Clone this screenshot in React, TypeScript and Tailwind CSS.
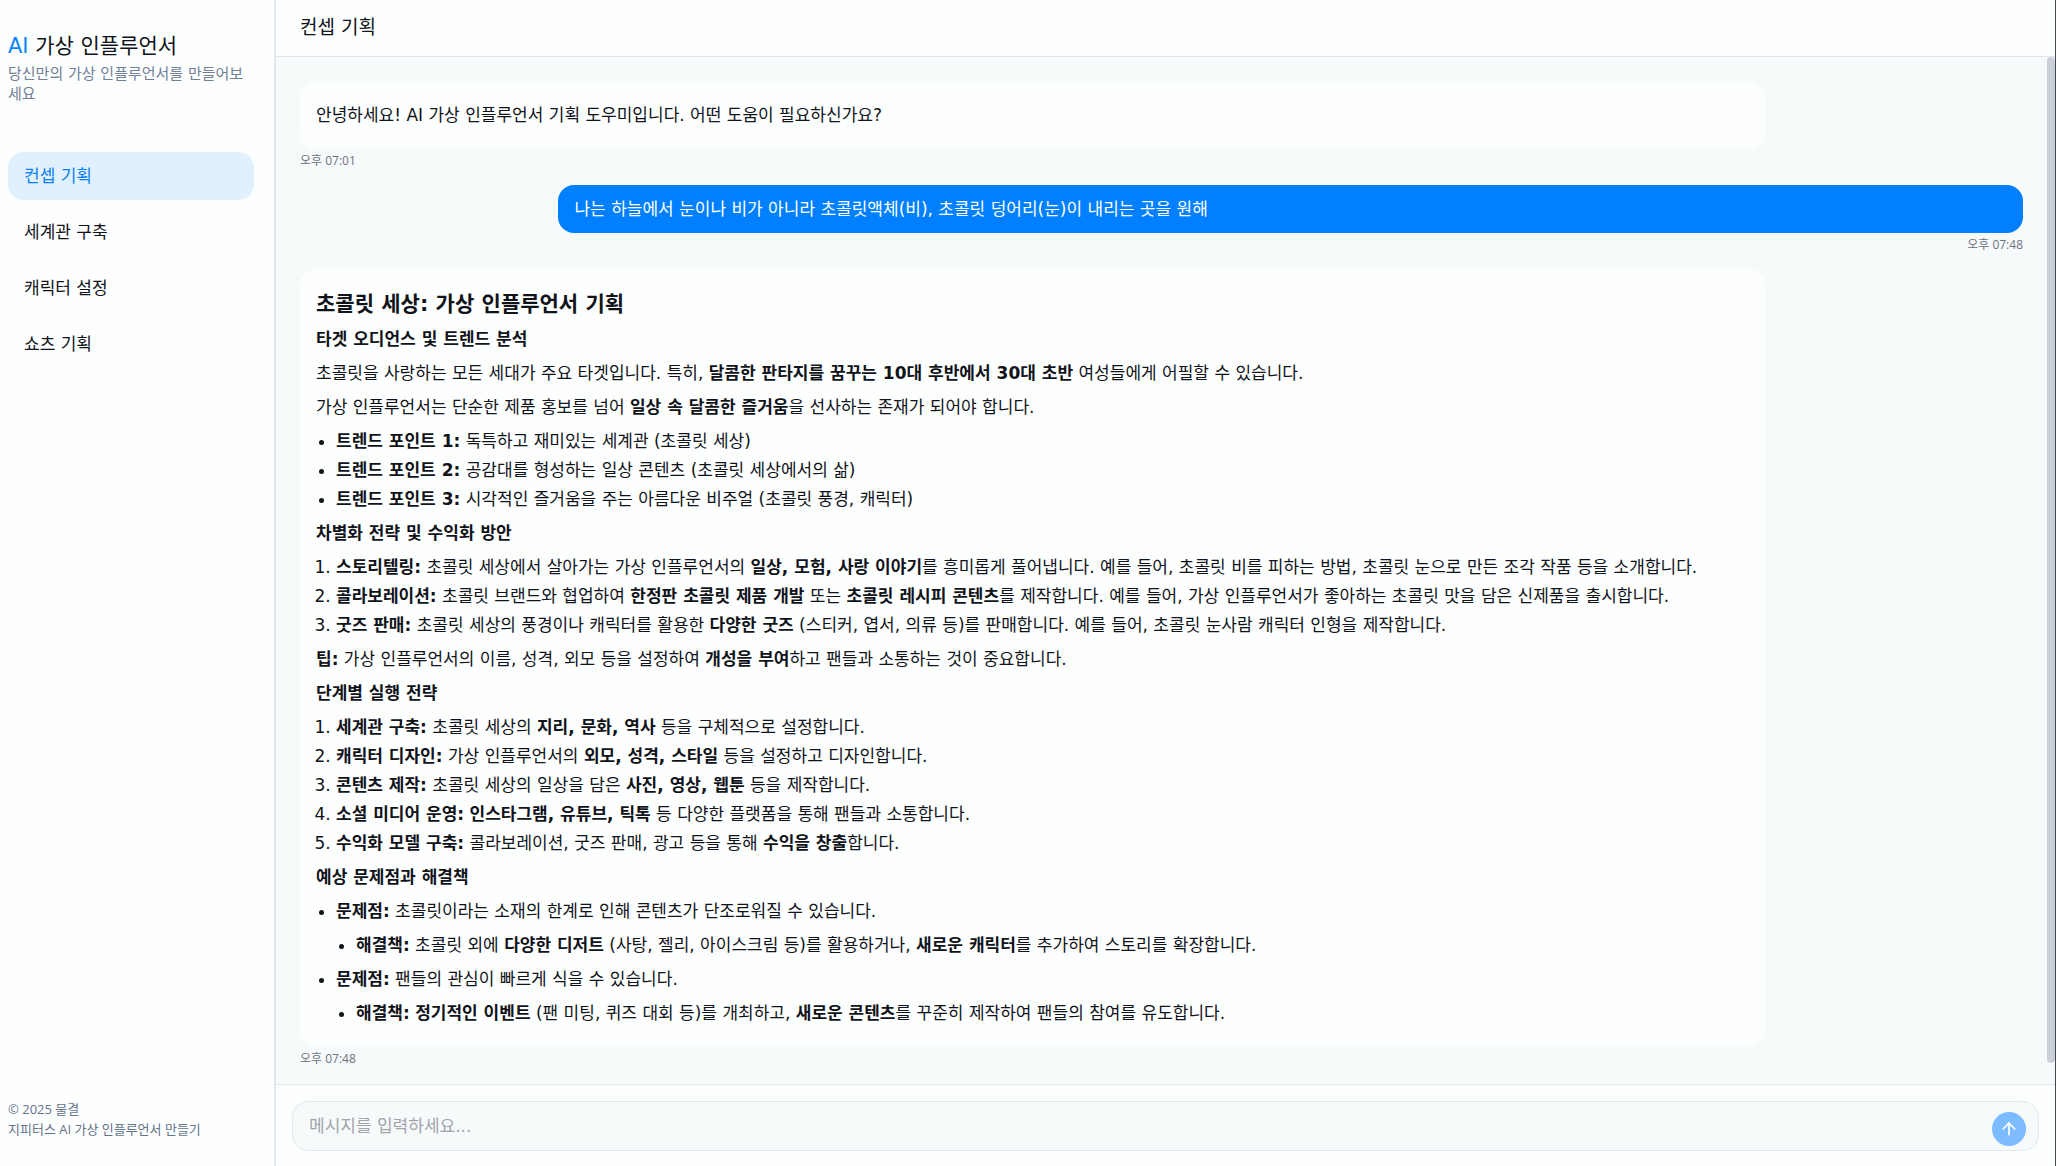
import { ArrowUp } from 'lucide-react'
import type { ReactNode } from 'react'

const menus = ['컨셉 기획', '세계관 구축', '캐릭터 설정', '쇼츠 기획']

function BotMessage({ time, children }: { time: string; children: ReactNode }) {
  return (
    <div className="w-[85%]">
      <div className="rounded-2xl bg-[#fdfefe] px-4 py-[21px] space-y-2">{children}</div>
      <Time>{time}</Time>
    </div>
  )
}

function UserMessage({ time, children }: { time: string; children: ReactNode }) {
  return (
    <div className="w-[85%] self-end text-right">
      <div className="rounded-2xl bg-[#0080ff] px-4 py-3 text-left leading-6 text-white">{children}</div>
      <Time>{time}</Time>
    </div>
  )
}

function Time({ children }: { children: ReactNode }) {
  return (
    <div className="mt-1 font-['Open_Sans','Noto_Sans_CJK_KR',sans-serif] text-[12px] leading-4 text-[#6b7280]">
      {children}
    </div>
  )
}

function H3({ children }: { children: ReactNode }) {
  return <h3 className="font-bold">{children}</h3>
}

function Plan() {
  return (
    <>
      <h2 className="text-[21px] leading-7 font-bold">초콜릿 세상: 가상 인플루언서 기획</h2>
      <H3>타겟 오디언스 및 트렌드 분석</H3>
      <p>
        초콜릿을 사랑하는 모든 세대가 주요 타겟입니다. 특히, <b>달콤한 판타지를 꿈꾸는 10대 후반에서 30대 초반</b> 여성들에게 어필할 수 있습니다.
      </p>
      <p>
        가상 인플루언서는 단순한 제품 홍보를 넘어 <b>일상 속 달콤한 즐거움</b>을 선사하는 존재가 되어야 합니다.
      </p>
      <ul className="list-disc pl-5 space-y-[3px]">
        <li><b>트렌드 포인트 1:</b> 독특하고 재미있는 세계관 (초콜릿 세상)</li>
        <li><b>트렌드 포인트 2:</b> 공감대를 형성하는 일상 콘텐츠 (초콜릿 세상에서의 삶)</li>
        <li><b>트렌드 포인트 3:</b> 시각적인 즐거움을 주는 아름다운 비주얼 (초콜릿 풍경, 캐릭터)</li>
      </ul>
      <H3>차별화 전략 및 수익화 방안</H3>
      <ol className="list-decimal pl-5 space-y-[3px]">
        <li><b>스토리텔링:</b> 초콜릿 세상에서 살아가는 가상 인플루언서의 <b>일상, 모험, 사랑 이야기</b>를 흥미롭게 풀어냅니다. 예를 들어, 초콜릿 비를 피하는 방법, 초콜릿 눈으로 만든 조각 작품 등을 소개합니다.</li>
        <li><b>콜라보레이션:</b> 초콜릿 브랜드와 협업하여 <b>한정판 초콜릿 제품 개발</b> 또는 <b>초콜릿 레시피 콘텐츠</b>를 제작합니다. 예를 들어, 가상 인플루언서가 좋아하는 초콜릿 맛을 담은 신제품을 출시합니다.</li>
        <li><b>굿즈 판매:</b> 초콜릿 세상의 풍경이나 캐릭터를 활용한 <b>다양한 굿즈</b> (스티커, 엽서, 의류 등)를 판매합니다. 예를 들어, 초콜릿 눈사람 캐릭터 인형을 제작합니다.</li>
      </ol>
      <p>
        <b>팁:</b> 가상 인플루언서의 이름, 성격, 외모 등을 설정하여 <b>개성을 부여</b>하고 팬들과 소통하는 것이 중요합니다.
      </p>
      <H3>단계별 실행 전략</H3>
      <ol className="list-decimal pl-5 space-y-[3px]">
        <li><b>세계관 구축:</b> 초콜릿 세상의 <b>지리, 문화, 역사</b> 등을 구체적으로 설정합니다.</li>
        <li><b>캐릭터 디자인:</b> 가상 인플루언서의 <b>외모, 성격, 스타일</b> 등을 설정하고 디자인합니다.</li>
        <li><b>콘텐츠 제작:</b> 초콜릿 세상의 일상을 담은 <b>사진, 영상, 웹툰</b> 등을 제작합니다.</li>
        <li><b>소셜 미디어 운영:</b> <b>인스타그램, 유튜브, 틱톡</b> 등 다양한 플랫폼을 통해 팬들과 소통합니다.</li>
        <li><b>수익화 모델 구축:</b> 콜라보레이션, 굿즈 판매, 광고 등을 통해 <b>수익을 창출</b>합니다.</li>
      </ol>
      <H3>예상 문제점과 해결책</H3>
      <ul className="list-disc pl-5 space-y-2">
        <li>
          <b>문제점:</b> 초콜릿이라는 소재의 한계로 인해 콘텐츠가 단조로워질 수 있습니다.
          <ul className="mt-2 list-disc pl-5">
            <li><b>해결책:</b> 초콜릿 외에 <b>다양한 디저트</b> (사탕, 젤리, 아이스크림 등)를 활용하거나, <b>새로운 캐릭터</b>를 추가하여 스토리를 확장합니다.</li>
          </ul>
        </li>
        <li>
          <b>문제점:</b> 팬들의 관심이 빠르게 식을 수 있습니다.
          <ul className="mt-2 list-disc pl-5">
            <li><b>해결책:</b> <b>정기적인 이벤트</b> (팬 미팅, 퀴즈 대회 등)를 개최하고, <b>새로운 콘텐츠</b>를 꾸준히 제작하여 팬들의 참여를 유도합니다.</li>
          </ul>
        </li>
      </ul>
    </>
  )
}

export default function App() {
  return (
    <div className="flex h-screen border-r border-[#3f4a50] bg-[#fdfefe] font-['DejaVu_Sans','Noto_Sans_CJK_KR',sans-serif] text-[17px] leading-[26px] text-[#10131a]">
      <aside className="flex w-[276px] shrink-0 flex-col border-r-2 border-[#e2e8f0] pt-8 pr-5 pb-[27px] pl-2">
        <h1 className="text-[21px] leading-7">
          <span className="text-[#0a84ff]">AI</span> 가상 인플루언서
        </h1>
        <p className="mt-1 text-[15px] leading-5 text-[#718096]">당신만의 가상 인플루언서를 만들어보세요</p>

        <nav className="mt-12 flex flex-col gap-2">
          {menus.map((menu, i) => (
            <button
              key={menu}
              className={
                i === 0
                  ? 'rounded-2xl bg-[#e1f0fd] px-4 py-3 text-left leading-6 text-[#0a80f5]'
                  : 'rounded-2xl px-4 py-3 text-left leading-6'
              }
            >
              {menu}
            </button>
          ))}
        </nav>

        <footer className="mt-auto font-['Open_Sans','Noto_Sans_CJK_KR',sans-serif] text-[13px] leading-5 text-[#64748b]">
          <p>© 2025 물결</p>
          <p>지피터스 AI 가상 인플루언서 만들기</p>
        </footer>
      </aside>

      <main className="flex min-w-0 flex-1 flex-col">
        <header className="border-b border-[#e2e5ea] px-6 pt-[15px] pb-[17px]">
          <h2 className="text-[19px] leading-6">컨셉 기획</h2>
        </header>

        <div className="flex min-h-0 flex-1 bg-[#f7fafb]">
          <div className="flex min-w-0 flex-1 flex-col gap-4 overflow-hidden p-6">
            <BotMessage time="오후 07:01">
              <p>안녕하세요! AI 가상 인플루언서 기획 도우미입니다. 어떤 도움이 필요하신가요?</p>
            </BotMessage>
            <UserMessage time="오후 07:48">
              나는 하늘에서 눈이나 비가 아니라 초콜릿액체(비), 초콜릿 덩어리(눈)이 내리는 곳을 원해
            </UserMessage>
            <BotMessage time="오후 07:48">
              <Plan />
            </BotMessage>
          </div>
          {/* scrollbar */}
          <div className="w-2 shrink-0">
            <div className="h-[98%] rounded-full bg-[#cbd0d6]" />
          </div>
        </div>

        <form className="border-t border-[#e2e5ea] px-4 pt-4 pb-[15px]">
          <div className="flex items-end rounded-2xl border border-[#e2e8f0] bg-[#f7fafb] pt-[10px] pr-3 pb-1 pl-4">
            <input
              aria-label="메시지"
              placeholder="메시지를 입력하세요..."
              className="mb-2 min-w-0 flex-1 bg-transparent leading-6 outline-none placeholder:text-[#a0a4ac]"
            />
            <button type="button" aria-label="보내기" className="flex size-[34px] items-center justify-center rounded-full bg-[#7cbbff] text-white">
              <ArrowUp size={20} />
            </button>
          </div>
        </form>
      </main>
    </div>
  )
}
